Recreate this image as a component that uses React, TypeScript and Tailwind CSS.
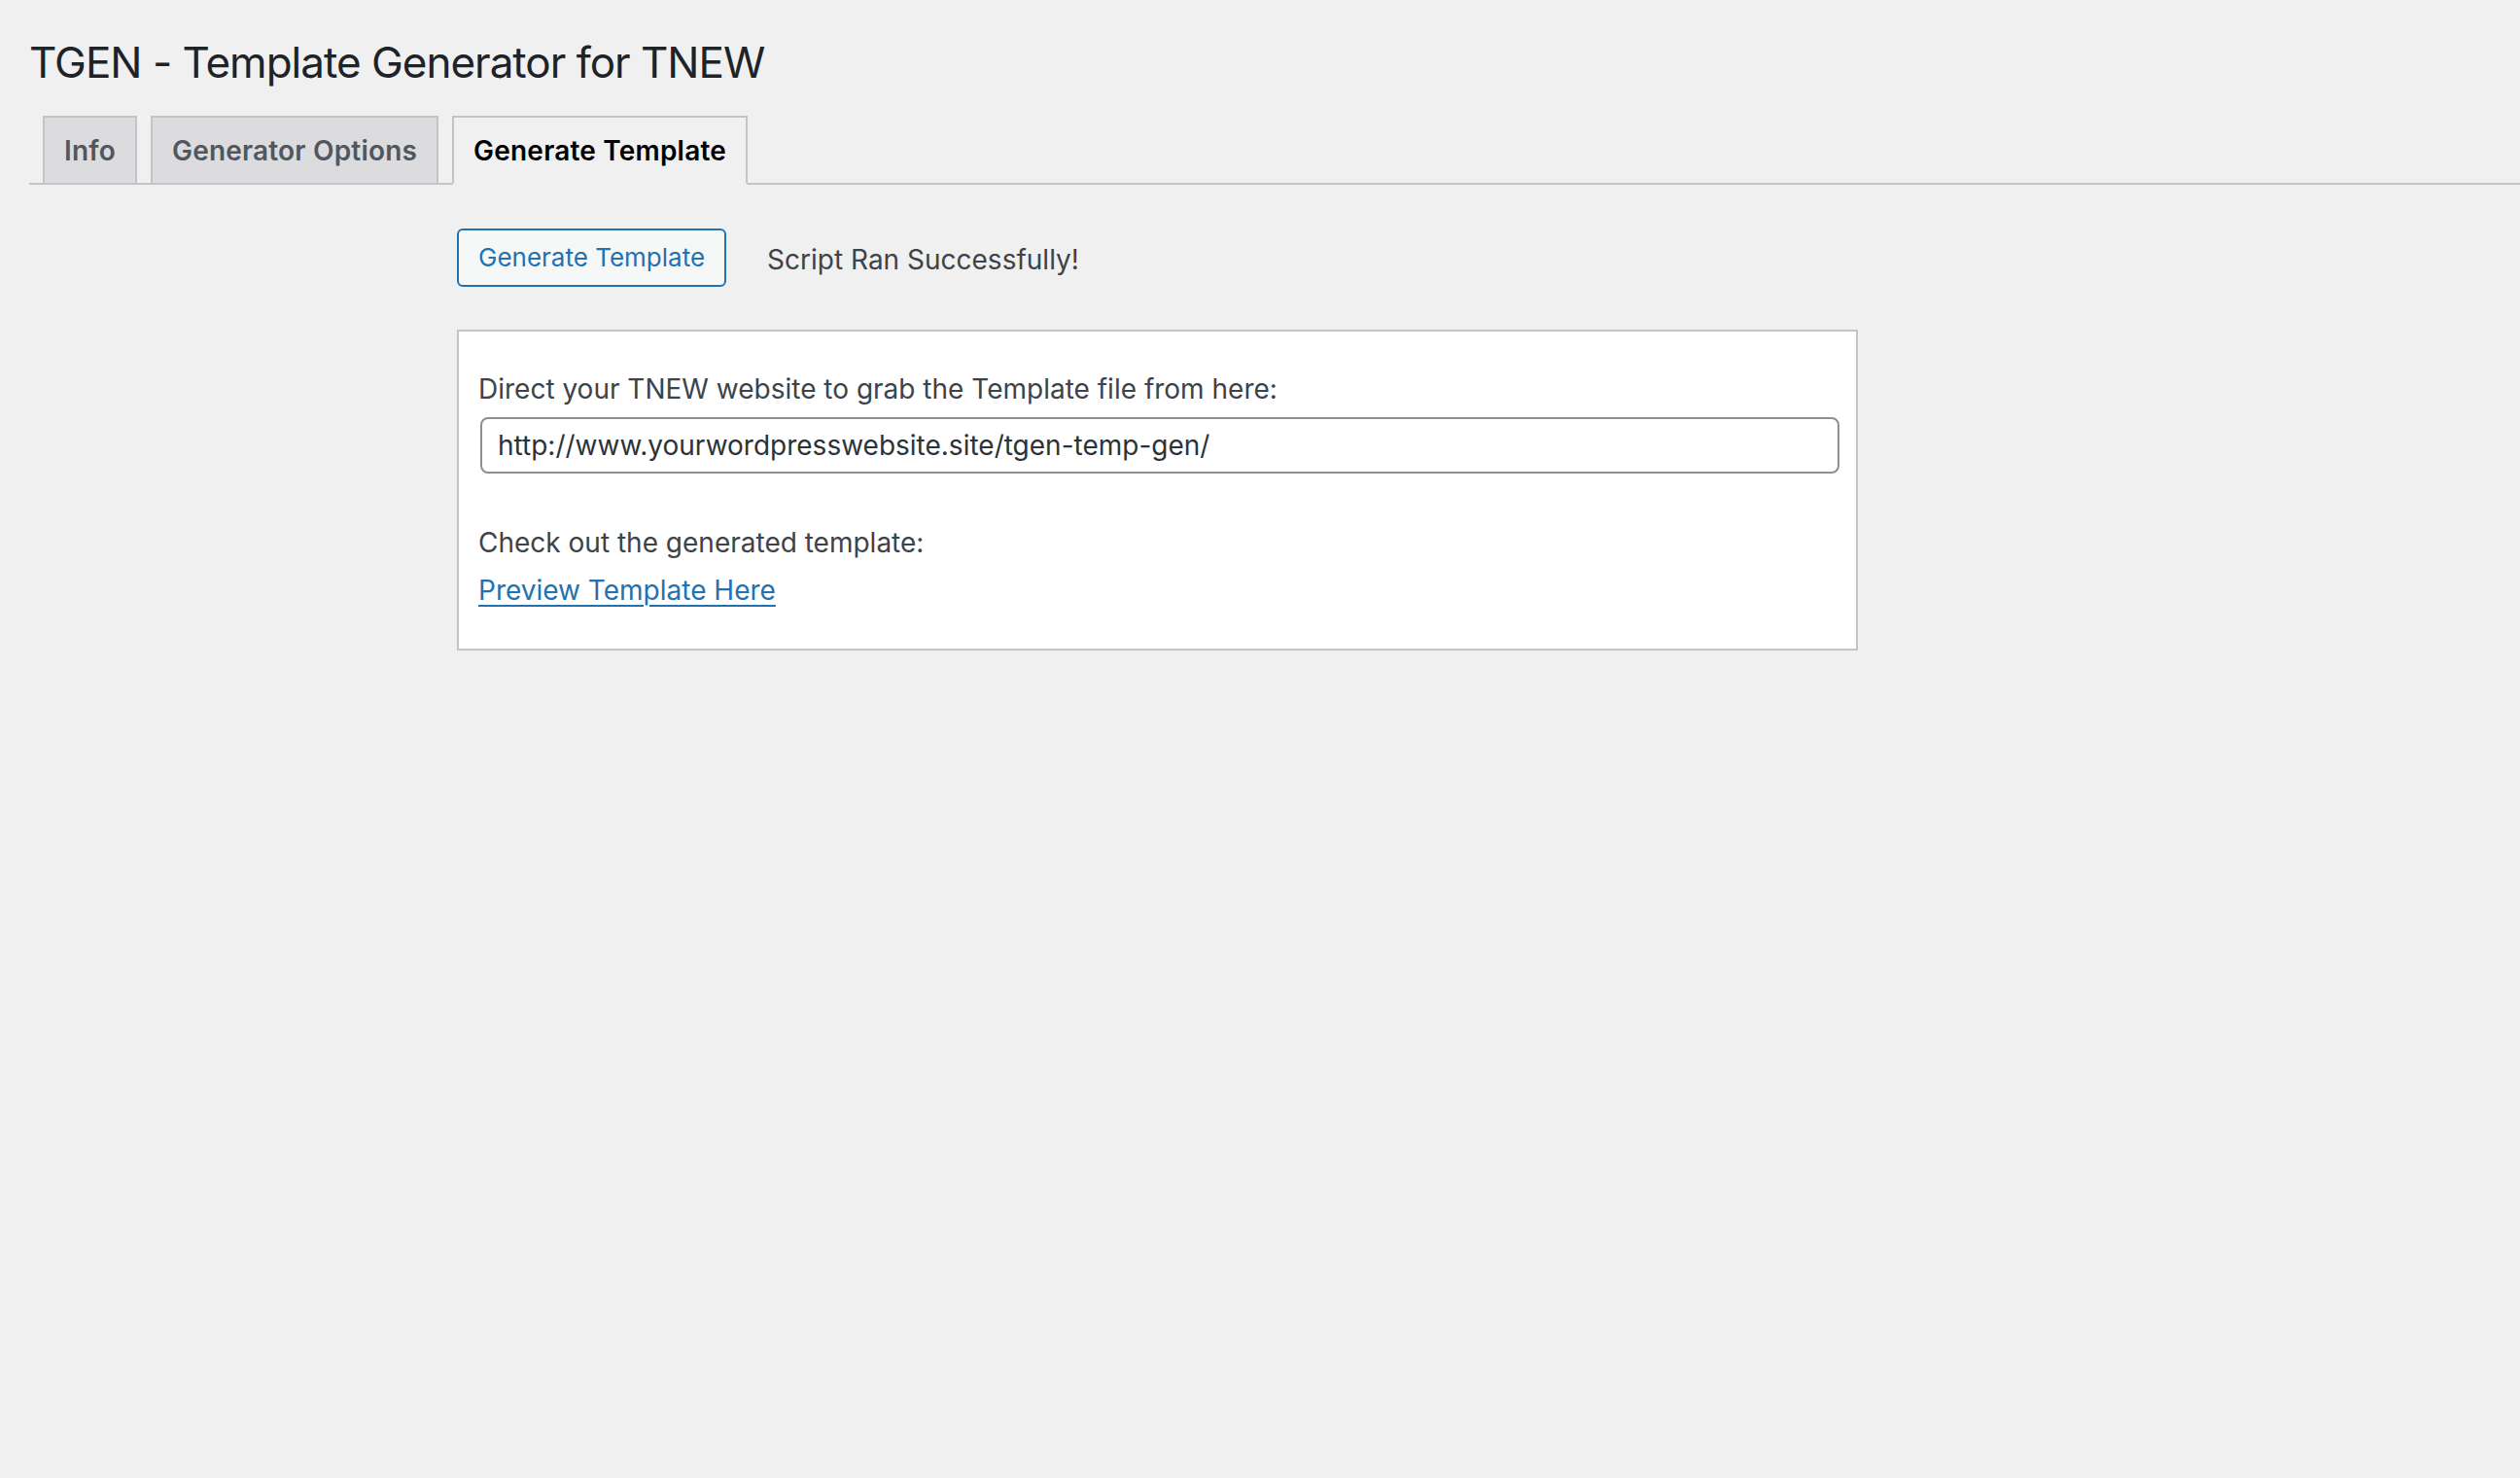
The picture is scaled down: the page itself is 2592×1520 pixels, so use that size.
import React from "react";

const tabs = [
  { id: "info", label: "Info" },
  { id: "options", label: "Generator Options" },
  { id: "generate", label: "Generate Template" },
];

export default function App() {
  const active = "generate";

  return (
    <div
      className="min-h-screen bg-[#f0f0f1] text-[#3c434a]"
      style={{ fontFamily: "Inter, 'Noto Sans', sans-serif" }}
    >
      <div className="pl-[30px]">
        <h1 className="pt-[34px] text-[44px] font-normal leading-[60px] tracking-[-1px] text-[#1d2327]">
          TGEN - Template Generator for TNEW
        </h1>

        {/* Tabs */}
        <nav className="mt-[25px] flex gap-[14px] border-b-2 border-[#c3c4c7] pl-[14px]">
          {tabs.map((t) => {
            const on = t.id === active;
            return (
              <a
                key={t.id}
                href="#"
                className={
                  on
                    ? "-mb-[2px] border-2 border-[#c3c4c7] border-b-[#f0f0f1] bg-[#f0f0f1] px-[20px] pb-[9px] pt-[10px] text-[28px] font-semibold leading-[48px] tracking-[0.2px] text-black"
                    : "-mb-[2px] border-2 border-[#c3c4c7] bg-[#dcdcde] px-[20px] pb-[9px] pt-[10px] text-[28px] font-semibold leading-[48px] tracking-[0.2px] text-[#50575e]"
                }
              >
                {t.label}
              </a>
            );
          })}
        </nav>

        {/* Form table */}
        <div className="mt-[45px] flex">
          <div className="w-[440px] shrink-0" />
          <div className="flex flex-col">
            <div className="flex items-start">
              <button className="h-[60px] rounded-[6px] border-2 border-[#2271b1] bg-[#f6f7f7] px-[20px] text-[26px] leading-[56px] text-[#2271b1]">
                Generate Template
              </button>
              <span className="ml-[42px] mt-[11px] text-[28px] leading-[42px] text-[#3c434a]">
                Script Ran Successfully!
              </span>
            </div>

            <div className="mt-[44px] w-[1441px] border-2 border-[#c3c4c7] bg-white pb-[39px] pl-[20px] pr-[17px] pt-[38px]">
              <p className="text-[28px] leading-[42px]">
                Direct your TNEW website to grab the Template file from here:
              </p>
              <input
                readOnly
                value="http://www.yourwordpresswebsite.site/tgen-temp-gen/"
                className="ml-[2px] mt-[8px] block h-[58px] w-[1398px] rounded-[8px] border-2 border-[#8c8f94] bg-white px-[16px] text-[28px] text-[#2c3338] outline-none"
              />
              <p className="mt-[50px] text-[28px] leading-[42px]">
                Check out the generated template:
              </p>
              <p className="mt-[7px] text-[28px] leading-[42px]">
                <a
                  href="#"
                  className="text-[#2271b1] underline decoration-[2px] underline-offset-[5px]"
                >
                  Preview Template Here
                </a>
              </p>
            </div>
          </div>
        </div>
      </div>
    </div>
  );
}
